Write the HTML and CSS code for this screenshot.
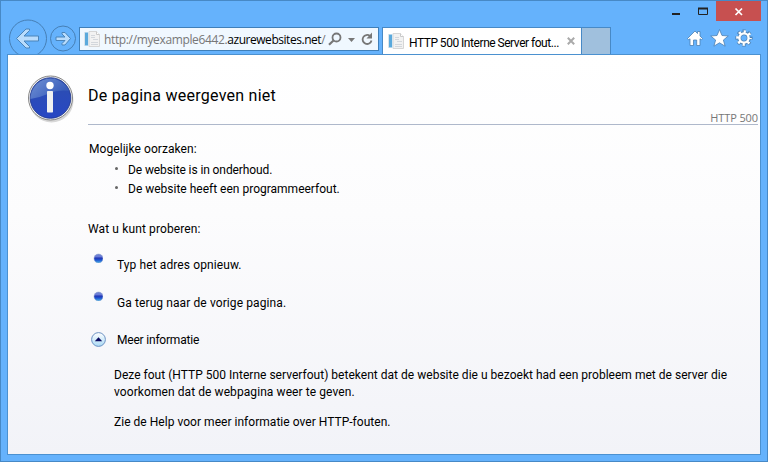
FILE: index.html
```html
<!DOCTYPE html>
<html lang="nl">
<head>
<meta charset="utf-8">
<title>HTTP 500 Interne Server fout</title>
<link rel="stylesheet" href="styles.css">
</head>
<body>
<svg width="0" height="0" class="defs" aria-hidden="true">
  <defs>
    <symbol id="page-icon" viewBox="0 0 16 16">
      <path d="M5 .5h7.500l3 3v12H5z" fill="#f2f2f2" stroke="#d6d6d6"/>
      <path d="M12.500.5v3h3" fill="#fff" stroke="#c9c9c9"/>
      <path d="M7 4.500h4M7 6.500h4M9 8.500h5M7 11.500h7M7 13.500h7" stroke="#d3d7dc"/>
      <path d="M1 1.500h3v13H1z" fill="#5aa9dc"/>
      <path d="M.5 1v14M4.500 1v14" stroke="#d9e4ec"/>
    </symbol>
    <linearGradient id="ball" x1="0" y1="0" x2="0" y2="1">
      <stop offset="0" stop-color="#7385cf"/><stop offset=".3" stop-color="#6a7cd8"/>
      <stop offset=".45" stop-color="#2336b4"/><stop offset=".65" stop-color="#1c50d0"/>
      <stop offset="1" stop-color="#4fb4e6"/>
    </linearGradient>
    <linearGradient id="disc" x1="0" y1="0" x2="0" y2="1">
      <stop offset="0" stop-color="#2d4fae"/><stop offset="1" stop-color="#2847c4"/>
    </linearGradient>
    <linearGradient id="shine" x1="0" y1="0" x2="1" y2=".6">
      <stop offset="0" stop-color="#7f9fdc"/><stop offset="1" stop-color="#3459b8"/>
    </linearGradient>
    <linearGradient id="toggle" x1="0" y1="0" x2="0" y2="1">
      <stop offset="0" stop-color="#fff"/><stop offset="1" stop-color="#a9d9f4"/>
    </linearGradient>
  </defs>
</svg>
<div class="window">
  <header class="titlebar">
    <svg class="caption" width="90" height="20" viewBox="0 0 90 20">
      <path d="M45 0h45v20H45z" fill="#c75050"/>
      <path d="M1 12h8v2H1z" fill="#222"/>
      <path d="M27.500 7.500h9v6h-9z" fill="none" stroke="#222"/>
      <path d="M27 7.500h10" stroke="#222" stroke-width="2"/>
      <path d="M64.500 7.500l6.500 6.500M71 7.500L64.500 14" stroke="#fff" stroke-width="1.700"/>
    </svg>
  </header>
  <div class="toolbar">
    <svg class="history" width="72" height="35" viewBox="0 0 72 35">
      <g fill="none" stroke="#467fb5">
        <circle cx="20" cy="19.500" r="18.500"/><circle cx="55" cy="19.500" r="12.500"/>
      </g>
      <g fill="#b9dcfc" stroke="#4b84b9" stroke-linejoin="round">
        <path d="M8.500 19.500L18 10h3.500v1.500l-5.500 5.500h14.500v5H16l5.500 5.500V29H18z"/>
        <path d="M62.500 19.500L57 13.500h-3v1.500l3 3h-9v3.500h9l-3 3V26h3z"/>
      </g>
    </svg>
    <div class="address">
      <svg width="16" height="16"><use href="#page-icon"/></svg>
      <span class="url">http://myexample6442.<b>azurewebsites.net</b>/</span>
      <svg class="tools" width="46" height="16" viewBox="0 0 46 16" fill="none" stroke="#777">
        <circle cx="8.500" cy="6.500" r="4" stroke-width="1.800"/>
        <path d="M5.500 9.500L1 13.800" stroke-width="2.200"/>
        <path d="M20 7h7l-3.500 4z" fill="#777" stroke="none"/>
        <path d="M42 5A4.500 4.500 0 1 0 43.500 9.500" stroke-width="1.800"/>
        <path d="M44 1.500v6h-5.500z" fill="#777" stroke="none"/>
      </svg>
    </div>
    <div class="tab">
      <svg width="16" height="16"><use href="#page-icon"/></svg>
      <span class="tab-title">HTTP 500 Interne Server fout...</span>
      <svg class="tab-close" width="8" height="8" viewBox="0 0 8 8"><path d="M.8.8l6.400 6.400M7.200.8L.8 7.200" stroke="#aaa" stroke-width="2"/></svg>
    </div>
    <div class="new-tab"></div>
    <svg class="commands" width="68" height="18" viewBox="0 0 68 18">
      <g fill="#fff" stroke="#4b80b3" stroke-width=".8">
        <path d="M.5 9.500L8 2l2.500 2.500V2.500H13v4.500l2.500 2.500-1 1.300-1.500-1V16.500H9.700V11H6.500v5.500H3V9.800l-1.300 1z"/>
        <path d="M32.500.5l2.500 6 6.300.5-4.900 4 1.700 6.200-5.600-3.400-5.600 3.400 1.700-6.200-4.900-4 6.300-.5z"/>
      </g>
      <g fill="none">
        <circle cx="57" cy="9" r="6.800" stroke="#4b80b3" stroke-width="3.600" stroke-dasharray="3 2.340" stroke-dashoffset="1.500"/>
        <circle cx="57" cy="9" r="4.800" stroke="#4b80b3" stroke-width="4"/>
        <circle cx="57" cy="9" r="6.400" stroke="#fff" stroke-width="2.800" stroke-dasharray="2.200 2.827" stroke-dashoffset="1.100"/>
        <circle cx="57" cy="9" r="4.600" stroke="#fff" stroke-width="2.400"/>
      </g>
    </svg>
  </div>
  <main class="page">
    <svg class="info" width="50" height="50" viewBox="0 0 50 50">
      <ellipse cx="24.500" cy="25.500" rx="22" ry="22" fill="#aaa" opacity=".45"/>
      <circle cx="23.500" cy="23" r="22" fill="#f4f4f4" stroke="#858585"/>
      <circle cx="23.500" cy="23" r="20.300" fill="url(#disc)" stroke="#1b3289" stroke-width=".8"/>
      <path d="M3.500 24a20 20 0 0 1 38.500-8Q31 14.500 22 18.500T3.500 24z" fill="url(#shine)" opacity=".85"/>
      <circle cx="23" cy="10.500" r="3.700" fill="#fff"/>
      <rect x="20" y="16" width="6" height="21.500" rx=".7" fill="#f1f1f1"/>
    </svg>
    <div class="content">
      <div class="heading">
        <h1>De pagina weergeven niet</h1>
        <div class="code">HTTP 500</div>
      </div>
      <p class="causes-title">Mogelijke oorzaken:</p>
      <ul class="causes">
        <li><span class="cause-maintenance">De website is in onderhoud.</span></li>
        <li><span>De website heeft een programmeerfout.</span></li>
      </ul>
      <p class="try-title">Wat u kunt proberen:</p>
      <div class="action">
        <svg width="10" height="10" viewBox="0 0 10 10"><circle cx="5.500" cy="5.500" r="4.500" fill="url(#ball)" stroke="#8fa3cc" stroke-width=".5"/></svg>
        <span>Typ het adres opnieuw.</span>
      </div>
      <div class="action">
        <svg width="10" height="10" viewBox="0 0 10 10"><circle cx="5.500" cy="5.500" r="4.500" fill="url(#ball)" stroke="#8fa3cc" stroke-width=".5"/></svg>
        <span>Ga terug naar de vorige pagina.</span>
      </div>
      <div class="more">
        <svg width="15" height="15" viewBox="0 0 15 15"><circle cx="7.500" cy="7.500" r="6.900" fill="url(#toggle)" stroke="#6c92c4"/><path d="M3.800 9.200L7.500 5.300l3.700 3.900z" fill="#0a0a60"/></svg>
        <span>Meer informatie</span>
      </div>
      <div class="details">
        <p>Deze fout (HTTP 500 Interne serverfout) betekent dat de website die u bezoekt had een probleem met de server die<br><span class="second-line">voorkomen dat de webpagina weer te geven.</span></p>
        <p>Zie de Help voor meer informatie over HTTP-fouten.</p>
      </div>
    </div>
  </main>
</div>
</body>
</html>
```
FILE: styles.css
```css
* { box-sizing: border-box; }
body { margin: 0; overflow: hidden; }
h1, p, ul { margin: 0; padding: 0; font-weight: 400; }
svg { display: block; flex: none; }
.defs { position: absolute; }

.window {
  display: flex;
  flex-direction: column;
  width: 768px;
  height: 462px;
  padding: 0 6px 6px;
  border: 1px solid #4789c6;
  background: #65b2fc;
  color: #000;
  font: 12px/18px Roboto, sans-serif;
  white-space: nowrap;
}

.titlebar { display: flex; justify-content: flex-end; height: 18px; flex: none; }

.toolbar { display: flex; align-items: flex-start; height: 35px; flex: none; overflow: hidden; }
.history { margin-left: 1px; }
.address {
  display: flex;
  align-items: center;
  width: 300px;
  height: 24px;
  margin-top: 8px;
  margin-left: -1px;
  padding: 0 4px;
  border: 1px solid #3f7fb9;
  background: #f0f8ff;
}
.url { width: 224px; margin: 1px 0 0 4px; color: #777; font: 12px/20px "Open Sans", sans-serif; letter-spacing: -.36px; }
.url b { color: #000; font-weight: 400; letter-spacing: -.46px; }
.tab {
  display: flex;
  align-items: center;
  width: 200px;
  height: 27px;
  margin: 8px 0 0 3px;
  padding: 0 5px;
  border: 1px solid #4789c6;
  border-bottom: 0;
  background: #fff;
}
.tab-title { width: 154px; margin: 4px 0 0 5px; letter-spacing: -.42px; word-spacing: -.4px; }
.tab-close { margin-left: 4px; }
.new-tab { width: 30px; height: 27px; margin: 8px 0 0 -1px; border: 1px solid #4789c6; border-bottom: 0; background: #a0c0dd; }
.commands { margin: 10px 0 0 76px; }

.page {
  display: flex;
  flex: 1;
  padding: 20px 2px 0 19px;
  border: 1px solid #4b91d0;
  background: linear-gradient(#fff, #fcfcfd 40%, #f2f3f8);
}
.content { flex: 1; margin-left: 11px; }
.heading { height: 50px; padding-top: 8px; border-bottom: 1px solid #aeb8cb; }
h1 { font-size: 16px; line-height: 26px; letter-spacing: .25px; }
.code { margin-top: 2px; color: #777; font: 11px/13px "Open Sans", sans-serif; letter-spacing: -.1px; text-align: right; }
.causes-title { margin: 15px 0 3px 1px; letter-spacing: .06px; }
.causes { list-style: none; margin-left: 27px; }
.causes li { display: flex; height: 19px; }
.causes li::before { content: ""; width: 3px; height: 3px; margin: 6px 10px 0 0; border-radius: 50%; background: #666; }
.cause-maintenance { letter-spacing: -.1px; }
.try-title { margin-top: 21px; letter-spacing: .12px; }
.action { display: flex; height: 38px; margin-left: 5px; }
.try-title + .action { margin-top: 15px; }
.action span { margin: 3px 0 0 14px; letter-spacing: .1px; }
.more { display: flex; margin: 2px 0 0 3px; }
.more svg { margin-top: 1px; }
.more span { margin-left: 11px; letter-spacing: -.2px; }
.details { margin: 18px 0 0 26px; line-height: 17px; letter-spacing: .02px; }
.second-line { letter-spacing: .08px; }
.details p + p { margin-top: 13px; letter-spacing: .03px; }
```
